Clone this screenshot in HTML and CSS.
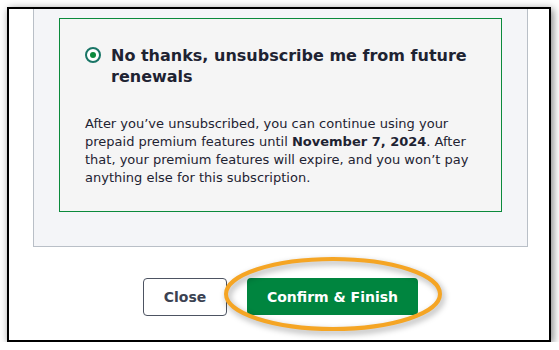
FILE: index.html
```html
<!DOCTYPE html>
<html>
<head>
  <link rel="stylesheet" href="styles.css">
</head>
<body>
  <div class="frame">
    <div class="panel">
      <div class="option">
        <div class="option-head">
          <span class="radio"><span class="radio-dot"></span></span>
          <h2>No thanks, unsubscribe me from future renewals</h2>
        </div>
        <p class="note">After you’ve unsubscribed, you can continue using your prepaid premium features until <strong>November 7, 2024</strong>. After that, your premium features will expire, and you won’t pay anything else for this subscription.</p>
      </div>
    </div>

    <div class="actions">
      <button class="btn btn-close">Close</button>
      <button class="btn btn-confirm">Confirm &amp; Finish</button>
      <svg class="highlight" width="226" height="82" viewBox="0 0 226 82">
        <ellipse cx="111" cy="39" rx="107" ry="35" fill="none" stroke="#f5a524" stroke-width="4"/>
      </svg>
    </div>
  </div>
</body>
</html>
```

FILE: styles.css
```css
body {
  margin: 0;
  background: #fff;
  font-family: "DejaVu Sans", Verdana, sans-serif;
  color: #1e2332;
}
.frame {
  margin: 7px 8px 0 7px;
  height: 331px;
  border: 2px solid #000;
  background: #fff;
  box-shadow: 2px 2px 8px rgba(0,0,0,0.5);
  overflow: hidden;
}
.panel {
  margin-left: 24px;
  width: 443px;
  padding: 9px 25px 34px 25px;
  background: #f4f5f8;
  border: 1px solid #b9bfc7;
  border-top: none;
}
.option {
  border: 1px solid #0b8a3c;
  background: #f5f5f5;
  padding: 26px 20px 24px 25px;
}
.option-head {
  display: flex;
  align-items: flex-start;
  gap: 10px;
}
.radio {
  flex: none;
  width: 12px;
  height: 12px;
  margin-top: 2px;
  border: 2px solid #197566;
  border-radius: 50%;
  background: #fff;
  display: flex;
  align-items: center;
  justify-content: center;
}
.radio-dot {
  width: 6px;
  height: 6px;
  border-radius: 50%;
  background: #0b8a3c;
}
h2 {
  margin: 0;
  font-size: 16px;
  line-height: 21px;
  font-weight: bold;
}
.note {
  margin: 28px 0 0;
  font-size: 13px;
  line-height: 18px;
}
.actions {
  position: relative;
  display: flex;
  justify-content: center;
  gap: 20px;
  margin-top: 31px;
  padding-left: 3px;
}
.btn {
  font-family: "DejaVu Sans", Verdana, sans-serif;
  font-size: 14px;
  font-weight: bold;
  border-radius: 4px;
  height: 38px;
}
.btn-close {
  width: 84px;
  background: #fff;
  color: #3b4252;
  border: 1px solid #4d5462;
}
.btn-confirm {
  width: 171px;
  height: 37px;
  background: #00853f;
  color: #fff;
  border: none;
}
.highlight {
  position: absolute;
  left: 213px;
  top: -23px;
  filter: drop-shadow(2px 3px 3px rgba(0,0,0,0.35));
}
```
